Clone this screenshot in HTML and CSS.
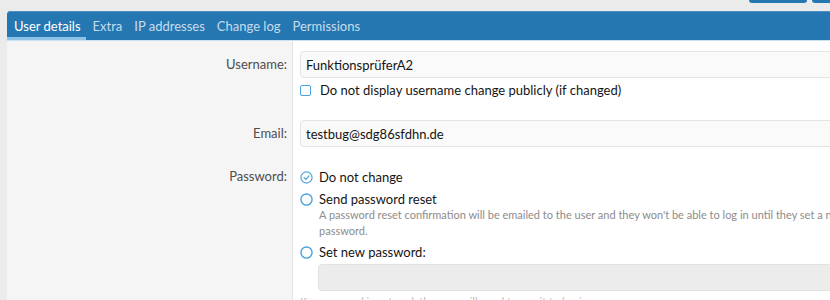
FILE: index.html
```html
<!DOCTYPE html>
<html lang="en">
<head>
    <meta charset="UTF-8">
    <title>Edit user</title>
    <link rel="stylesheet" href="styles.css">
</head>
<body>
    <div class="page">
        <div class="page-top">
            <div class="title-tail"></div>
            <div class="top-buttons">
                <span class="top-button wide"></span>
                <span class="top-button"></span>
            </div>
        </div>

        <div class="block">
            <div class="tabs">
                <a class="tab active">User details</a>
                <a class="tab">Extra</a>
                <a class="tab">IP addresses</a>
                <a class="tab">Change log</a>
                <a class="tab">Permissions</a>
            </div>

            <div class="form">
                <div class="row row-first">
                    <div class="label">Username:</div>
                    <div class="field">
                        <div class="input">FunktionsprüferA2</div>
                        <label class="check">
                            <span class="box"></span>
                            Do not display username change publicly (if changed)
                        </label>
                    </div>
                </div>

                <div class="row">
                    <div class="label">Email:</div>
                    <div class="field">
                        <div class="input">testbug@sdg86sfdhn.de</div>
                    </div>
                </div>

                <div class="row row-password">
                    <div class="label">Password:</div>
                    <div class="field">
                        <div class="radio">
                            <svg class="radio-icon" viewBox="0 0 14 14">
                                <circle cx="7" cy="7" r="6" fill="none" stroke="#4aa3df" stroke-width="1.3"/>
                                <path d="M4.4 7.2 L6.3 9 L9.7 5.2" fill="none" stroke="#4aa3df" stroke-width="1.3" stroke-linecap="round" stroke-linejoin="round"/>
                            </svg>
                            Do not change
                        </div>
                        <div class="radio">
                            <svg class="radio-icon" viewBox="0 0 14 14">
                                <circle cx="7" cy="7" r="6" fill="none" stroke="#4aa3df" stroke-width="1.5"/>
                            </svg>
                            Send password reset
                        </div>
                        <div class="hint">A password reset confirmation will be emailed to the user and they won't be able to log in until they set a new password.</div>
                        <div class="radio">
                            <svg class="radio-icon" viewBox="0 0 14 14">
                                <circle cx="7" cy="7" r="6" fill="none" stroke="#4aa3df" stroke-width="1.5"/>
                            </svg>
                            Set new password:
                        </div>
                        <div class="input input-disabled"></div>
                        <div class="hint hint-below">If a password is entered, the user will need to use it to log in.</div>
                    </div>
                </div>
            </div>
        </div>
    </div>
</body>
</html>
```

FILE: styles.css
```css
body {
    margin: 0;
    background-color: #ebebeb;
    font-family: Lato, "Noto Sans", sans-serif;
    font-size: 13px;
    color: #141414;
    overflow: hidden;
}

.page {
    width: 870px;
}

.page-top {
    display: flex;
    height: 11px;
}

.title-tail {
    width: 2px;
    height: 4px;
    margin-left: 178px;
    background-color: #333;
}

.top-buttons {
    display: flex;
    gap: 5px;
    margin-left: 571px;
}

.top-button {
    width: 60px;
    height: 3px;
    background-color: #2577b1;
    border-radius: 0 0 4px 4px;
}

.top-button.wide {
    width: 58px;
}

.block {
    margin-left: 7px;
    background-color: #fff;
}

.tabs {
    display: flex;
    height: 29px;
    background-color: #2577b1;
    border-top: 1px solid #4d90c1;
    box-sizing: border-box;
    border-radius: 3px 0 0 0;
}

.tab {
    display: flex;
    align-items: center;
    padding: 2px 5px 0 7px;
    color: #c7dcec;
    border-bottom: 3px solid transparent;
}

.tab.active {
    color: #fff;
    border-bottom-color: #8dc2e9;
}

.form {
    border-top: 1px solid #c7e0f2;
}

.row {
    display: flex;
}

.label {
    width: 286px;
    box-sizing: border-box;
    flex-shrink: 0;
    padding: 16px 5px 0 0;
    text-align: right;
    color: #4d4d4d;
    background-color: #f5f5f5;
    border-right: 1px solid #e3e3e3;
}

.field {
    flex: 1;
    padding: 11px 7px 10px 7px;
}

.row-first .field {
    padding-top: 10px;
}

.row-first .label {
    padding-top: 15px;
}

.input {
    height: 27px;
    box-sizing: border-box;
    padding: 4px 5px;
    line-height: 18px;
    background-color: #fafafa;
    border: 1px solid #e4e4e4;
    border-radius: 4px;
}

.check {
    display: flex;
    align-items: center;
    gap: 9px;
    margin-top: 4px;
    line-height: 17px;
}

.box {
    width: 9px;
    height: 9px;
    border: 1.5px solid #4aa3df;
    border-radius: 2px;
    background-color: #fff;
}

.row-password .label {
    padding-top: 11px;
}

.row-password .field {
    padding-top: 11px;
}

.radio {
    display: flex;
    align-items: center;
    gap: 6px;
    line-height: 18px;
    margin-bottom: 4px;
}

.radio-icon {
    width: 13px;
    height: 13px;
}

.hint {
    margin: -5px 0 4px 19px;
    font-size: 11px;
    line-height: 16px;
    color: #8c8c8c;
}

.input-disabled {
    margin-left: 18px;
    margin-top: -1px;
    background-color: #ececec;
    border-color: #e2e2e2;
}

.hint-below {
    margin: 3px 0 0 0;
    color: #bbb;
}
```
